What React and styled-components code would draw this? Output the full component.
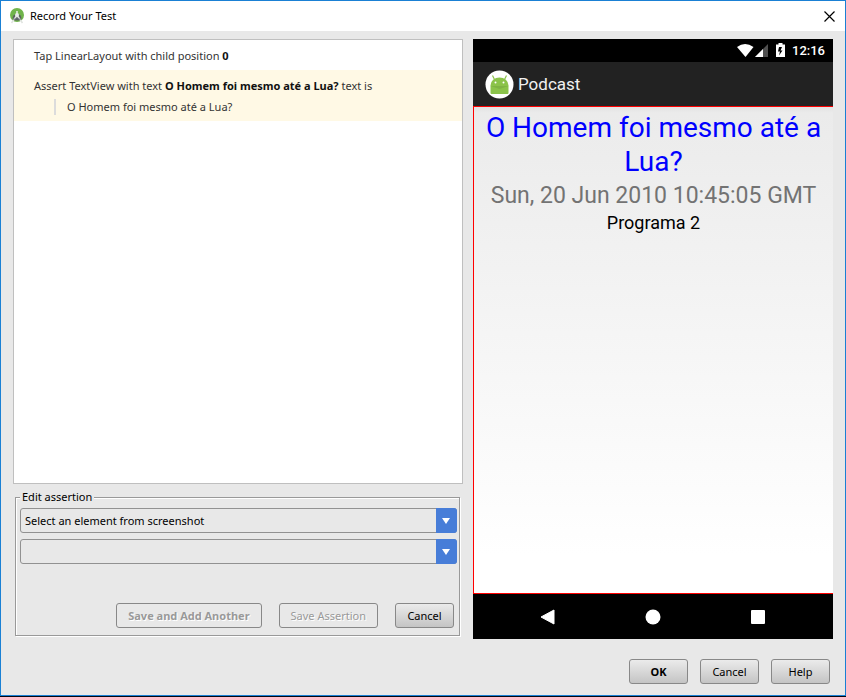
import React from "react";
import styled, { createGlobalStyle, css } from "styled-components";

const GlobalStyle = createGlobalStyle`
  * { box-sizing: border-box; }
  body {
    margin: 0;
    background: #05050f;
    font-family: "Noto Sans", "Open Sans", sans-serif;
    font-size: 11px;
    line-height: 16px;
    color: #000;
  }
  button, select { font: inherit; color: inherit; }
`;

const Window = styled.main`
  display: flex;
  flex-direction: column;
  min-height: calc(100vh - 1px);
  margin-bottom: 1px;
  border: 1px solid #1a80d4;
  background: #e8e8e8;
`;

const TitleBar = styled.header`
  display: flex;
  align-items: center;
  height: 30px;
  padding: 0 8px;
  background: #fff;
`;

const Title = styled.h1`
  flex: 1;
  margin: 0 0 0 4px;
  font-size: 11px;
  font-weight: 400;
`;

const CloseButton = styled.button`
  display: flex;
  align-items: center;
  justify-content: center;
  width: 16px;
  height: 16px;
  padding: 0;
  border: 0;
  background: none;
`;

const Body = styled.div`
  flex: 1;
  display: grid;
  grid-template-columns: minmax(0, 1fr) 360px;
  gap: 10px;
  padding: 8px 12px 0;
`;

const LeftColumn = styled.div`
  display: flex;
  flex-direction: column;
`;

const StepList = styled.ul`
  flex: 1;
  margin: 0;
  padding: 0;
  list-style: none;
  background: #fff;
  border: 1px solid #bfbfbf;
  color: #333;

  b { color: #111; }
`;

const Step = styled.li`
  padding: 8px 20px 6px;
  background: ${(p) => (p.$selected ? "#fff9e5" : "transparent")};
`;

const StepDetail = styled.div`
  margin: 5px 0 0 20px;
  padding-left: 11px;
  border-left: 2px solid #dcdcdc;
`;

const AssertionGroup = styled.fieldset`
  min-width: 0;
  margin: 6px 3px 3px 2px;
  padding: 4px 2px 7px 4px;
  border: 1px solid #999;
  box-shadow: 1px 1px 0 #fff, inset 1px 1px 0 #fff;
`;

const Legend = styled.legend`
  padding: 0 2px;
  line-height: 14px;
  background: #e8e8e8;
`;

const ComboBox = styled.div`
  display: grid;
  grid-template-columns: minmax(0, 1fr) 21px;
  height: 25px;
  margin-bottom: 6px;
`;

const ComboSelect = styled.select`
  grid-area: 1 / 1 / 2 / 3;
  appearance: none;
  padding: 0 24px 0 4px;
  border: 1px solid #919191;
  border-radius: 3px;
  background: #e8e8e8;
`;

const ComboArrow = styled.span`
  grid-area: 1 / 2 / 2 / 3;
  display: flex;
  align-items: center;
  justify-content: center;
  border-radius: 0 3px 3px 0;
  background: #477dd8;
  pointer-events: none;
`;

const GroupActions = styled.div`
  display: flex;
  justify-content: flex-end;
  gap: 17px;
  margin: 39px 3px 0 0;
`;

const Button = styled.button`
  min-width: 59px;
  height: 25px;
  padding: 0 11px;
  border: 1px solid #888;
  border-radius: 3px;
  background: linear-gradient(#ebebeb, #c4c4c4);
  font-weight: ${(p) => (p.$strong ? 700 : 400)};
  white-space: nowrap;

  ${(p) =>
    p.disabled &&
    css`
      background: none;
      color: #999;
      text-shadow: 1px 1px 0 #fff;
    `}
`;

const Footer = styled.footer`
  display: flex;
  justify-content: flex-end;
  gap: 12px;
  padding: 20px 15px 11px;
`;

const Phone = styled.section`
  display: flex;
  flex-direction: column;
  min-height: 600px;
  background: #000;
  font-family: Roboto, sans-serif;
`;

const StatusBar = styled.div`
  display: flex;
  align-items: center;
  justify-content: flex-end;
  height: 23px;
  padding: 0 8px;
  color: #fff;
  font-size: 13px;
  font-weight: 500;
`;

const StatusIcons = styled.svg`
  margin-right: 6px;
`;

const AppBar = styled.div`
  display: flex;
  align-items: center;
  gap: 4px;
  height: 44px;
  padding: 0 12px;
  background: #222;
`;

const AppTitle = styled.h2`
  margin: 0;
  color: #f0f0f0;
  font-size: 17px;
  line-height: 20px;
  font-weight: 400;
`;

const Screen = styled.div`
  flex: 1;
  padding: 4px;
  border: solid #f00;
  border-width: 1px 0 1px 1px;
  background: linear-gradient(#e2e2e2, #ebebeb 6px, #fff 92%);
  text-align: center;
`;

const Episode = styled.h3`
  margin: 0;
  color: #00f;
  font-size: 28px;
  line-height: 34px;
  font-weight: 400;
`;

const EpisodeDate = styled.p`
  margin: 0;
  color: #737373;
  font-size: 23px;
  line-height: 34px;
  white-space: nowrap;
`;

const Program = styled.p`
  margin: 0;
  color: #000;
  font-size: 18px;
  line-height: 20px;
`;

const NavBar = styled.nav`
  display: flex;
  align-items: center;
  justify-content: space-between;
  height: 45px;
  padding: 0 64px;
`;

const NavButton = styled.button`
  display: flex;
  padding: 0;
  border: 0;
  background: none;
`;

const StudioIcon = () => (
  <svg width="17" height="17" viewBox="0 0 17 17" aria-hidden="true">
    <circle cx="8" cy="7" r="7" fill="#70b44b" />
    <path d="M3.500 10.500a4.500 4.500 0 0 1 9 0l-2 2h-5z" fill="#59645c" />
    <path d="M8 3v3" stroke="#eee" strokeWidth="1.500" />
    <path d="M7.500 8 2.500 15M8.500 8l5 7" stroke="#dfe3df" strokeWidth="1.500" fill="none" />
    <path d="M4.500 11.500q3.500-2 7 0" stroke="#667" fill="none" />
    <circle cx="8" cy="7" r="2" fill="#e8eee8" />
  </svg>
);

const CloseIcon = () => (
  <svg width="11" height="11" viewBox="0 0 11 11" aria-hidden="true">
    <path d="M.5.5l10 10M10.500.5l-10 10" stroke="#000" strokeWidth="1.200" />
  </svg>
);

const SignalIcons = () => (
  <StatusIcons width="50" height="16" viewBox="0 0 50 16" aria-hidden="true">
    <path d="M1 4Q9 -2 17.500 4L9.500 14z" fill="#fff" />
    <path d="M32 1v13H19z" fill="#505050" />
    <path d="M27 6v8h-8z" fill="#fff" />
    <path d="M42.500 0h4v1.500h2.500v12.500h-9v-12.500h2.500z" fill="#fff" />
    <path d="M46 4h-3l-1 4.500h2l-1 4 3.500-5h-2z" fill="#000" />
  </StatusIcons>
);

const RobotIcon = () => (
  <svg width="29" height="29" viewBox="0 0 29 29" aria-hidden="true">
    <circle cx="14.500" cy="14.500" r="14" fill="#fff" />
    <path d="M5.500 15.500a9 8 0 0 1 18 0v7.500q0 1-1 1h-16q-1 0-1-1z" fill="#8bc34a" />
    <path d="M9.500 9.500 7.500 5.500M19.500 9.500l2-4" stroke="#8bc34a" strokeWidth="1.200" />
    <path d="M5.500 16h18L14.500 19z" fill="#7fb344" />
    <circle cx="10.500" cy="12.500" r="1" fill="#fff" />
    <circle cx="18.500" cy="12.500" r="1" fill="#fff" />
  </svg>
);

const Combo = ({ label, options }) => (
  <ComboBox>
    <ComboSelect aria-label={label}>
      {options.map((o) => (
        <option key={o}>{o}</option>
      ))}
    </ComboSelect>
    <ComboArrow>
      <svg width="9" height="6" viewBox="0 0 9 6" aria-hidden="true">
        <path d="M0 0h8L4 6z" fill="#fff" />
      </svg>
    </ComboArrow>
  </ComboBox>
);

export default function App() {
  return (
    <>
      <GlobalStyle />
      <Window>
        <TitleBar>
          <StudioIcon />
          <Title>Record Your Test</Title>
          <CloseButton aria-label="Close">
            <CloseIcon />
          </CloseButton>
        </TitleBar>
        <Body>
          <LeftColumn>
            <StepList>
              <Step>
                Tap LinearLayout with child position <b>0</b>
              </Step>
              <Step $selected>
                Assert TextView with text <b>O Homem foi mesmo até a Lua?</b> text is
                <StepDetail>O Homem foi mesmo até a Lua?</StepDetail>
              </Step>
            </StepList>
            <AssertionGroup>
              <Legend>Edit assertion</Legend>
              <Combo label="Element" options={["Select an element from screenshot"]} />
              <Combo label="Assertion" options={[""]} />
              <GroupActions>
                <Button disabled $strong>Save and Add Another</Button>
                <Button disabled>Save Assertion</Button>
                <Button>Cancel</Button>
              </GroupActions>
            </AssertionGroup>
          </LeftColumn>
          <Phone>
            <StatusBar>
              <SignalIcons />
              12:16
            </StatusBar>
            <AppBar>
              <RobotIcon />
              <AppTitle>Podcast</AppTitle>
            </AppBar>
            <Screen>
              <Episode>O Homem foi mesmo até a Lua?</Episode>
              <EpisodeDate>Sun, 20 Jun 2010 10:45:05 GMT</EpisodeDate>
              <Program>Programa 2</Program>
            </Screen>
            <NavBar>
              <NavButton aria-label="Back">
                <svg width="22" height="16" viewBox="0 0 22 16">
                  <path d="M17 1v14L4 8z" fill="#fff" stroke="#fff" strokeLinejoin="round" />
                </svg>
              </NavButton>
              <NavButton aria-label="Home">
                <svg width="22" height="16" viewBox="0 0 22 16">
                  <circle cx="11" cy="8" r="7.500" fill="#fff" />
                </svg>
              </NavButton>
              <NavButton aria-label="Recent apps">
                <svg width="22" height="16" viewBox="0 0 22 16">
                  <rect x="4" y="1" width="14" height="14" rx="1" fill="#fff" />
                </svg>
              </NavButton>
            </NavBar>
          </Phone>
        </Body>
        <Footer>
          <Button $strong>OK</Button>
          <Button>Cancel</Button>
          <Button>Help</Button>
        </Footer>
      </Window>
    </>
  );
}
